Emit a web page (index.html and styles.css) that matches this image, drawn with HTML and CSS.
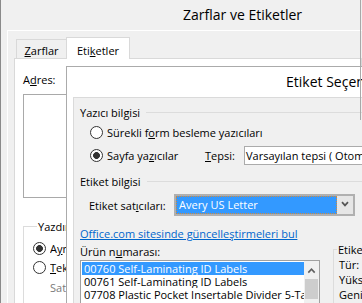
FILE: index.html
```html
<!DOCTYPE html>
<html lang="tr">
<head>
<meta charset="utf-8">
<title>Zarflar ve Etiketler</title>
<link rel="stylesheet" href="styles.css">
</head>
<body>
<div class="screen">
  <div class="win">
    <div class="win-title">Zarflar ve Etiketler</div>
    <div class="win-body">
      <div class="tabs">
        <div class="tab tab-zarf"><u>Z</u>arflar</div>
        <div class="tab tab-etiket active">Eti<u>k</u>etler</div>
      </div>
      <div class="tabpanel">
        <div class="label">A<u>d</u>res:</div>
        <div class="textarea"></div>
        <div class="group print-group">
          <div class="group-title">Yazdır</div>
          <div class="radio-row first"><span class="radio checked"></span><span class="clip">A<u>y</u>nı etiketin tam sayfası</span></div>
          <div class="radio-row"><span class="radio"></span><span class="clip"><u>T</u>ek etiket</span></div>
          <div class="sub-row disabled"><span class="clip">Satır:</span></div>
        </div>
      </div>
    </div>
  </div>

  <div class="dialog">
    <div class="dlg-title">Etiket Seçenekleri</div>
    <div class="dlg-client">
      <div class="section-head">Yazıcı bilgisi</div>
      <div class="radio-row r1"><span class="radio"></span><span>Sürekli f<u>o</u>rm besleme yazıcıları</span></div>
      <div class="r2">
        <div class="radio-row rlabel"><span class="radio checked"></span><span>Sayfa ya<u>z</u>ıcılar</span></div>
        <span class="tray-label"><u>T</u>epsi:</span>
        <div class="select">Varsayılan tepsi ( Otomatik olarak seç )</div>
      </div>
      <div class="section-head second">Etiket bilgisi</div>
      <div class="vendor-row">
        <span class="vendor-label">Etiket sat<u>ı</u>cıları:</span>
        <div class="combo">
          <div class="combo-value">Avery US Letter</div>
          <div class="combo-btn">
            <svg width="16" height="18" viewBox="0 0 16 18"><path d="M5 6.2 L8 9.4 L11 6.2" fill="none" stroke="#555" stroke-width="1.7"/></svg>
          </div>
        </div>
      </div>
      <a class="link">Office.com sitesinde güncelleştirmeleri bul</a>
      <div class="lower">
        <div class="products">
          <div class="label prod-label">Ürün n<u>u</u>marası:</div>
          <div class="listbox">
            <div class="items">
              <div class="item sel">00760 Self-Laminating ID Labels</div>
              <div class="item">00761 Self-Laminating ID Labels</div>
              <div class="item">07708 Plastic Pocket Insertable Divider 5-Tab</div>
              <div class="item">07709 Plastic Pocket Insertable Divider 8-Tab</div>
            </div>
            <div class="scrollbar">
              <div class="sb-btn">
                <svg width="15" height="17" viewBox="0 0 15 17"><path d="M4.3 11.6 L7.5 8.2 L10.7 11.6" fill="none" stroke="#606060" stroke-width="1.6"/></svg>
              </div>
              <div class="sb-thumb"></div>
            </div>
          </div>
        </div>
        <div class="group info-group">
          <div class="group-title">Etiket bilgileri</div>
          <div class="info">Tür:</div>
          <div class="info">Yükseklik:</div>
          <div class="info">Genişlik:</div>
        </div>
      </div>
    </div>
  </div>
  <div class="edge"></div>
</div>
</body>
</html>
```

FILE: styles.css
```css
html, body {
  margin: 0;
  padding: 0;
}
body {
  background: #f0f0f0;
  font-family: "Open Sans", "Noto Sans", sans-serif;
  font-size: 11px;
  line-height: 15px;
  color: #000;
}
u {
  text-decoration: underline;
}
.screen {
  position: relative;
  width: 362px;
  height: 303px;
  overflow: hidden;
  background: #f0f0f0;
}

/* outer window */
.win {
  box-sizing: border-box;
  height: 100%;
  border-left: 1px solid #8a8a8a;
  display: flex;
  flex-direction: column;
}
.win-title {
  flex: none;
  height: 30px;
  font-size: 14px;
  line-height: 29px;
  padding-left: 182px;
  white-space: nowrap;
}
.win-body {
  flex: 1;
  margin-left: 6px;
  border-left: 1px solid #fff;
  border-top: 1px solid #fff;
  padding-left: 6px;
  display: flex;
  flex-direction: column;
}
.tabs {
  display: flex;
  align-items: flex-end;
  padding-top: 6px;
  padding-left: 2px;
}
.tab {
  box-sizing: border-box;
  border: 1px solid #d9d9d9;
  border-bottom: none;
  text-align: center;
  white-space: nowrap;
}
.tab-zarf {
  width: 50px;
  height: 19px;
  padding-top: 3px;
  border-right: none;
}
.tab-etiket {
  width: 64px;
  height: 22px;
  padding-top: 5px;
  margin-bottom: -1px;
  background: #fff;
  position: relative;
  z-index: 1;
}
.tabpanel {
  flex: 1;
  border: 1px solid #d9d9d9;
  background: #fff;
  padding: 13px 0 0 8px;
}
.textarea {
  margin-top: 7px;
  width: 200px;
  height: 102px;
  border: 1px solid #a9a9a9;
  background: #fff;
}
.group {
  border: 1px solid #dcdcdc;
}
.group-title {
  display: table;
  margin: -8px 0 0 4px;
  padding: 0 1px;
  background: #fff;
  white-space: nowrap;
}
.print-group {
  margin-top: 28px;
  width: 200px;
  height: 100px;
  padding-left: 9px;
}
.clip {
  display: block;
  overflow: hidden;
  white-space: nowrap;
}
.print-group .radio-row .clip {
  width: 16px;
}
.print-group .sub-row .clip {
  width: 16px;
}
.radio-row {
  display: flex;
  align-items: center;
  gap: 4px;
  height: 19px;
  white-space: nowrap;
}
.radio-row.first {
  margin-top: 5px;
}
.radio {
  flex: none;
  box-sizing: border-box;
  width: 13px;
  height: 13px;
  border: 1px solid #333;
  border-radius: 50%;
  background: #fff;
}
.radio.checked {
  background: radial-gradient(circle, #333 0 3.1px, #fff 3.7px);
}
.sub-row {
  margin-top: 3px;
  padding-left: 17px;
}
.disabled {
  color: #7a7a7a;
}

/* inner dialog */
.dialog {
  position: absolute;
  left: 66px;
  top: 66px;
  width: 330px;
  height: 270px;
  border: 1px solid #ababab;
  background: #fff;
  z-index: 2;
  display: flex;
  flex-direction: column;
}
.dlg-title {
  flex: none;
  height: 30px;
  font-size: 14px;
  line-height: 30px;
  padding-left: 219px;
  white-space: nowrap;
}
.dlg-client {
  flex: 1;
  margin-left: 6px;
  border-left: 1px solid #dadada;
  border-top: 1px solid #dadada;
  background: #f0f0f0;
  padding: 7px 0 0 6px;
}
.section-head {
  display: flex;
  align-items: center;
  gap: 6px;
  white-space: nowrap;
}
.section-head::after {
  content: "";
  flex: 1;
  height: 1px;
  background: #dcdcdc;
}
.section-head.second {
  margin-top: 9px;
}
.r1 {
  margin: 3px 0 0 10px;
}
.r2 {
  display: flex;
  align-items: center;
  margin: 4px 0 0 10px;
  height: 19px;
}
.rlabel {
  width: 115px;
  flex: none;
}
.tray-label {
  width: 39px;
  flex: none;
}
.select {
  flex: 1;
  box-sizing: border-box;
  height: 19px;
  border: 1px solid #ababab;
  background: #fff;
  padding-left: 1px;
  line-height: 17px;
  white-space: nowrap;
  overflow: hidden;
}
.vendor-row {
  display: flex;
  align-items: center;
  margin-top: 5px;
  padding-left: 9px;
}
.vendor-label {
  width: 85px;
  flex: none;
  white-space: nowrap;
}
.combo {
  box-sizing: border-box;
  width: 181px;
  height: 22px;
  border: 2px solid #b0b0b0;
  display: flex;
  background: #fff;
}
.combo-value {
  flex: 1;
  box-sizing: border-box;
  background: #3399ff;
  color: #fff;
  border: 1px dotted #d08a3c;
  padding-left: 2px;
  line-height: 16px;
  white-space: nowrap;
}
.combo-btn {
  width: 16px;
  background: #e6e6e6;
}
.combo-btn svg {
  display: block;
}
.link {
  display: block;
  margin-top: 10px;
  color: #0066cc;
  text-decoration: underline;
  white-space: nowrap;
}
.lower {
  display: flex;
  align-items: flex-start;
}
.prod-label {
  margin-top: 3px;
}
.listbox {
  margin-top: 1px;
  width: 240px;
  height: 60px;
  box-sizing: border-box;
  border: 1px solid #a0a0a0;
  background: #fff;
  display: flex;
}
.items {
  flex: 1;
  min-width: 0;
  padding: 1px 0 0 1px;
}
.item {
  height: 13px;
  line-height: 13px;
  padding-left: 2px;
  white-space: nowrap;
  overflow: hidden;
}
.item.sel {
  background: #3399ff;
  color: #fff;
}
.scrollbar {
  width: 15px;
  flex: none;
  background: #f0f0f0;
}
.sb-btn svg {
  display: block;
}
.sb-thumb {
  margin: 1px 1px 0 1px;
  height: 20px;
  background: #cdcdcd;
}
.info-group {
  margin: 8px 0 0 13px;
  width: 100px;
  height: 80px;
}
.info-group .group-title {
  background: #f0f0f0;
  margin-left: 3px;
}
.info {
  padding-left: 5px;
  white-space: nowrap;
}
.info:first-of-type {
  margin-top: 4px;
}
.edge {
  position: absolute;
  left: 360px;
  top: 0;
  width: 1px;
  height: 120px;
  background: #a8a8a8;
  z-index: 3;
}
```
